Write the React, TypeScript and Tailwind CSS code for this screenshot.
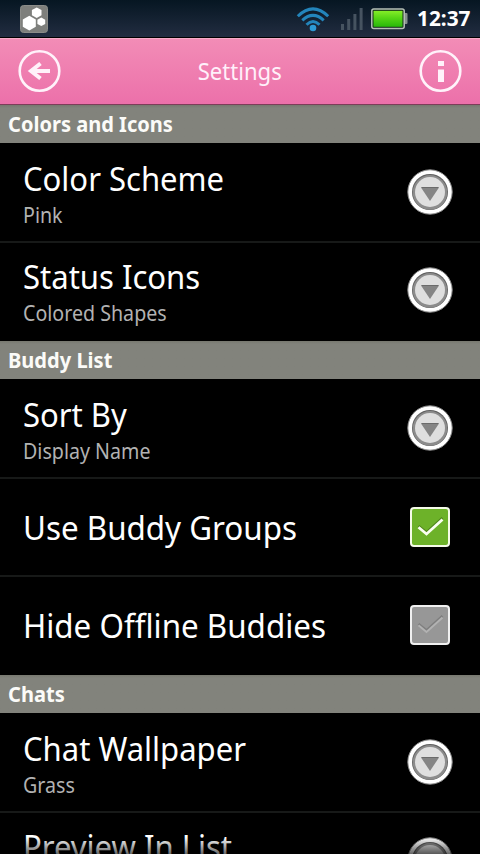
import type { ReactNode } from 'react';

function AppBadge() {
  return (
    <svg width="28" height="28" viewBox="0 0 28 28">
      <rect x="0.5" y="0.5" width="27" height="27" rx="3" fill="#7e7f7c" stroke="#8b8c89" />
      <g fill="#fff">
        <path d="M9.300 10.800l6.500 3.700v7.200l-6.500 3.800-6.500-3.800v-7.200z" />
        <path d="M16.700 2.500l4.800 2.600v5.200l-4.800 2.700-4.800-2.700V5.100z" />
        <path d="M21.300 12.600l3.900 2.100v4.200l-3.900 2.100-3.900-2.100v-4.200z" />
      </g>
    </svg>
  );
}

function Wifi() {
  return (
    <svg width="34" height="26" viewBox="0 0 34 26" fill="none" stroke="#2385bb" strokeWidth="3">
      <path d="M1.800 10.300Q17 -4.500 32.200 10.300" />
      <path d="M6.300 14.300Q17 4.500 27.700 14.300" />
      <path d="M10.500 18.700Q17 12.300 23.500 18.700" strokeWidth="3" />
      <circle cx="17" cy="22" r="3.300" fill="#2d9bd5" stroke="none" />
    </svg>
  );
}

function Signal() {
  return (
    <svg width="22" height="22" viewBox="0 0 22 22" fill="#465360">
      <path d="M0 16h3v6H0zM6.200 11h3v11h-3zM12.400 6h3v16h-3zM18.600 0h3v22h-3z" />
    </svg>
  );
}

function Battery() {
  return (
    <svg width="37" height="22" viewBox="0 0 37 22">
      <defs>
        <linearGradient id="charge" x2="0" y2="1">
          <stop stopColor="#85ed28" />
          <stop offset="0.45" stopColor="#56d515" />
          <stop offset="1" stopColor="#28b80a" />
        </linearGradient>
      </defs>
      <rect x="33" y="5" width="3.500" height="11" rx="1" fill="#87918f" />
      <rect x="0.800" y="1" width="32.400" height="19.500" rx="2" fill="#102518" stroke="#b7c0b7" strokeWidth="1.500" />
      <rect x="2.500" y="2.800" width="29" height="16" fill="url(#charge)" />
    </svg>
  );
}

function BackIcon() {
  return (
    <svg width="44" height="44" viewBox="0 0 44 44" fill="none" stroke="#fff2fa">
      <circle cx="21.500" cy="22" r="19.800" strokeWidth="2.600" />
      <path d="M13 22H32" strokeWidth="4" />
      <path d="M22.500 14.500L13 22L22.500 29.500" strokeWidth="4" />
    </svg>
  );
}

function InfoIcon() {
  return (
    <svg width="44" height="44" viewBox="0 0 44 44">
      <circle cx="22.500" cy="22" r="19.800" fill="none" stroke="#fff2fa" strokeWidth="2.600" />
      <path d="M20 12h6v5h-6zM20 20.500h6V33h-6z" fill="#fff2fa" />
    </svg>
  );
}

function DropIcon() {
  return (
    <svg width="46" height="46" viewBox="0 0 46 46">
      <circle cx="23" cy="23" r="22.200" fill="#fff" stroke="#888" strokeWidth="1" />
      <circle cx="23" cy="23" r="18" fill="#5f5f5f" />
      <circle cx="23" cy="23.400" r="17.300" fill="#8c8c8c" />
      <circle cx="23" cy="23" r="15" fill="#dfdfdf" />
      <path d="M14 18.500h18L23 32z" fill="#858585" />
      <path d="M14.500 18.500h17" stroke="#6b6b6b" />
    </svg>
  );
}

function CheckBox({ on }: { on: boolean }) {
  return (
    <svg width="40" height="40" viewBox="0 0 40 40" fill="none">
      <rect x="1" y="1" width="38" height="38" rx="3" fill={on ? '#6db229' : '#979797'} stroke={on ? '#f5fbe8' : '#f0f0f0'} strokeWidth="2" />
      <path d="M8.500 19L16.500 25.500L32.500 11" stroke={on ? '#4d851a' : '#7e7e7e'} strokeWidth="2.500" />
      <path d="M8.500 20.200L16.500 27L32.500 12.500" stroke={on ? '#fafff0' : '#b2b2b2'} strokeWidth={on ? 2.800 : 2} />
    </svg>
  );
}

function Section({ title, children }: { title: string; children: ReactNode }) {
  return (
    <section className="shrink-0 pb-[2px]">
      <h2 className="flex h-[38px] items-center bg-[#82837c] bg-linear-to-b from-[#77786f] from-0% to-[#82837c] to-8% px-2 pt-[2px] text-[21px] font-bold text-[#fbfbf8]">
        <span className="origin-left scale-x-[0.955] whitespace-nowrap">{title}</span>
      </h2>
      <div>{children}</div>
    </section>
  );
}

function Row({ title, detail, control, first = false }: { title: string; detail?: string; control: ReactNode; first?: boolean }) {
  return (
    <div className={'flex h-[98px] justify-between pr-[27px] pl-[23px] ' + (first ? 'pt-[2px]' : 'border-t-2 border-[#171918]')}>
      {detail ? (
        <div className="pt-[15px]">
          <div className="h-[38px] origin-left scale-x-[0.940] text-[33px] leading-[38px] whitespace-nowrap text-white">{title}</div>
          <div className="h-[34px] origin-left scale-x-[0.935] text-[21px] leading-[34px] whitespace-nowrap text-[#b2b2b2]">{detail}</div>
        </div>
      ) : (
        <div className="origin-left scale-x-[0.950] pt-[30px] text-[33px] leading-[38px] whitespace-nowrap text-white">{title}</div>
      )}
      <div className={detail ? 'pt-[24px]' : 'pt-[28px] pr-[3px]'}>{control}</div>
    </div>
  );
}

export default function App() {
  return (
    <div className="relative flex h-[854px] w-[480px] flex-col overflow-hidden bg-black font-['Noto_Sans',sans-serif] [font-variant-ligatures:none]">
      <div className="flex h-[38px] shrink-0 items-center justify-between border-b border-black bg-linear-to-b from-[#061622] to-[#222d41] pr-[9px] pl-5">
        <AppBadge />
        <div className="flex items-center">
          <Wifi />
          <div className="ml-[11px]"><Signal /></div>
          <div className="ml-[8px]"><Battery /></div>
          <div className="ml-[9px] w-[54px] pt-px text-[21px] font-bold text-white"><span className="inline-block origin-left scale-x-[0.990] whitespace-nowrap">12:37</span></div>
        </div>
      </div>
      <header className="flex h-[67px] shrink-0 items-center justify-between border-t border-b border-t-[#f7acc8] border-b-[#7d3d59] bg-linear-to-b from-[#f28cb6] to-[#ec70aa] px-[18px] pb-px">
        <BackIcon />
        <h1 className="pt-px text-[23px] text-[#fff0fa]"><span className="inline-block scale-x-[0.960]">Settings</span></h1>
        <InfoIcon />
      </header>
      <Section title="Colors and Icons">
        <Row first title="Color Scheme" detail="Pink" control={<DropIcon />} />
        <Row title="Status Icons" detail="Colored Shapes" control={<DropIcon />} />
      </Section>
      <Section title="Buddy List">
        <Row first title="Sort By" detail="Display Name" control={<DropIcon />} />
        <Row title="Use Buddy Groups" control={<CheckBox on />} />
        <Row title="Hide Offline Buddies" control={<CheckBox on={false} />} />
      </Section>
      <Section title="Chats">
        <Row first title="Chat Wallpaper" detail="Grass" control={<DropIcon />} />
        <div className="flex justify-between border-t-2 border-[#171918] pt-[15px] pr-[27px] pl-[23px]">
          <div className="h-[38px] origin-left scale-x-[0.940] text-[33px] leading-[38px] whitespace-nowrap text-white">Preview In List</div>
          <div className="h-[46px] pt-[9px]"><DropIcon /></div>
        </div>
      </Section>
      <div className="absolute inset-x-0 bottom-0 h-[17px] bg-linear-to-b from-transparent to-black/60" />
    </div>
  );
}
